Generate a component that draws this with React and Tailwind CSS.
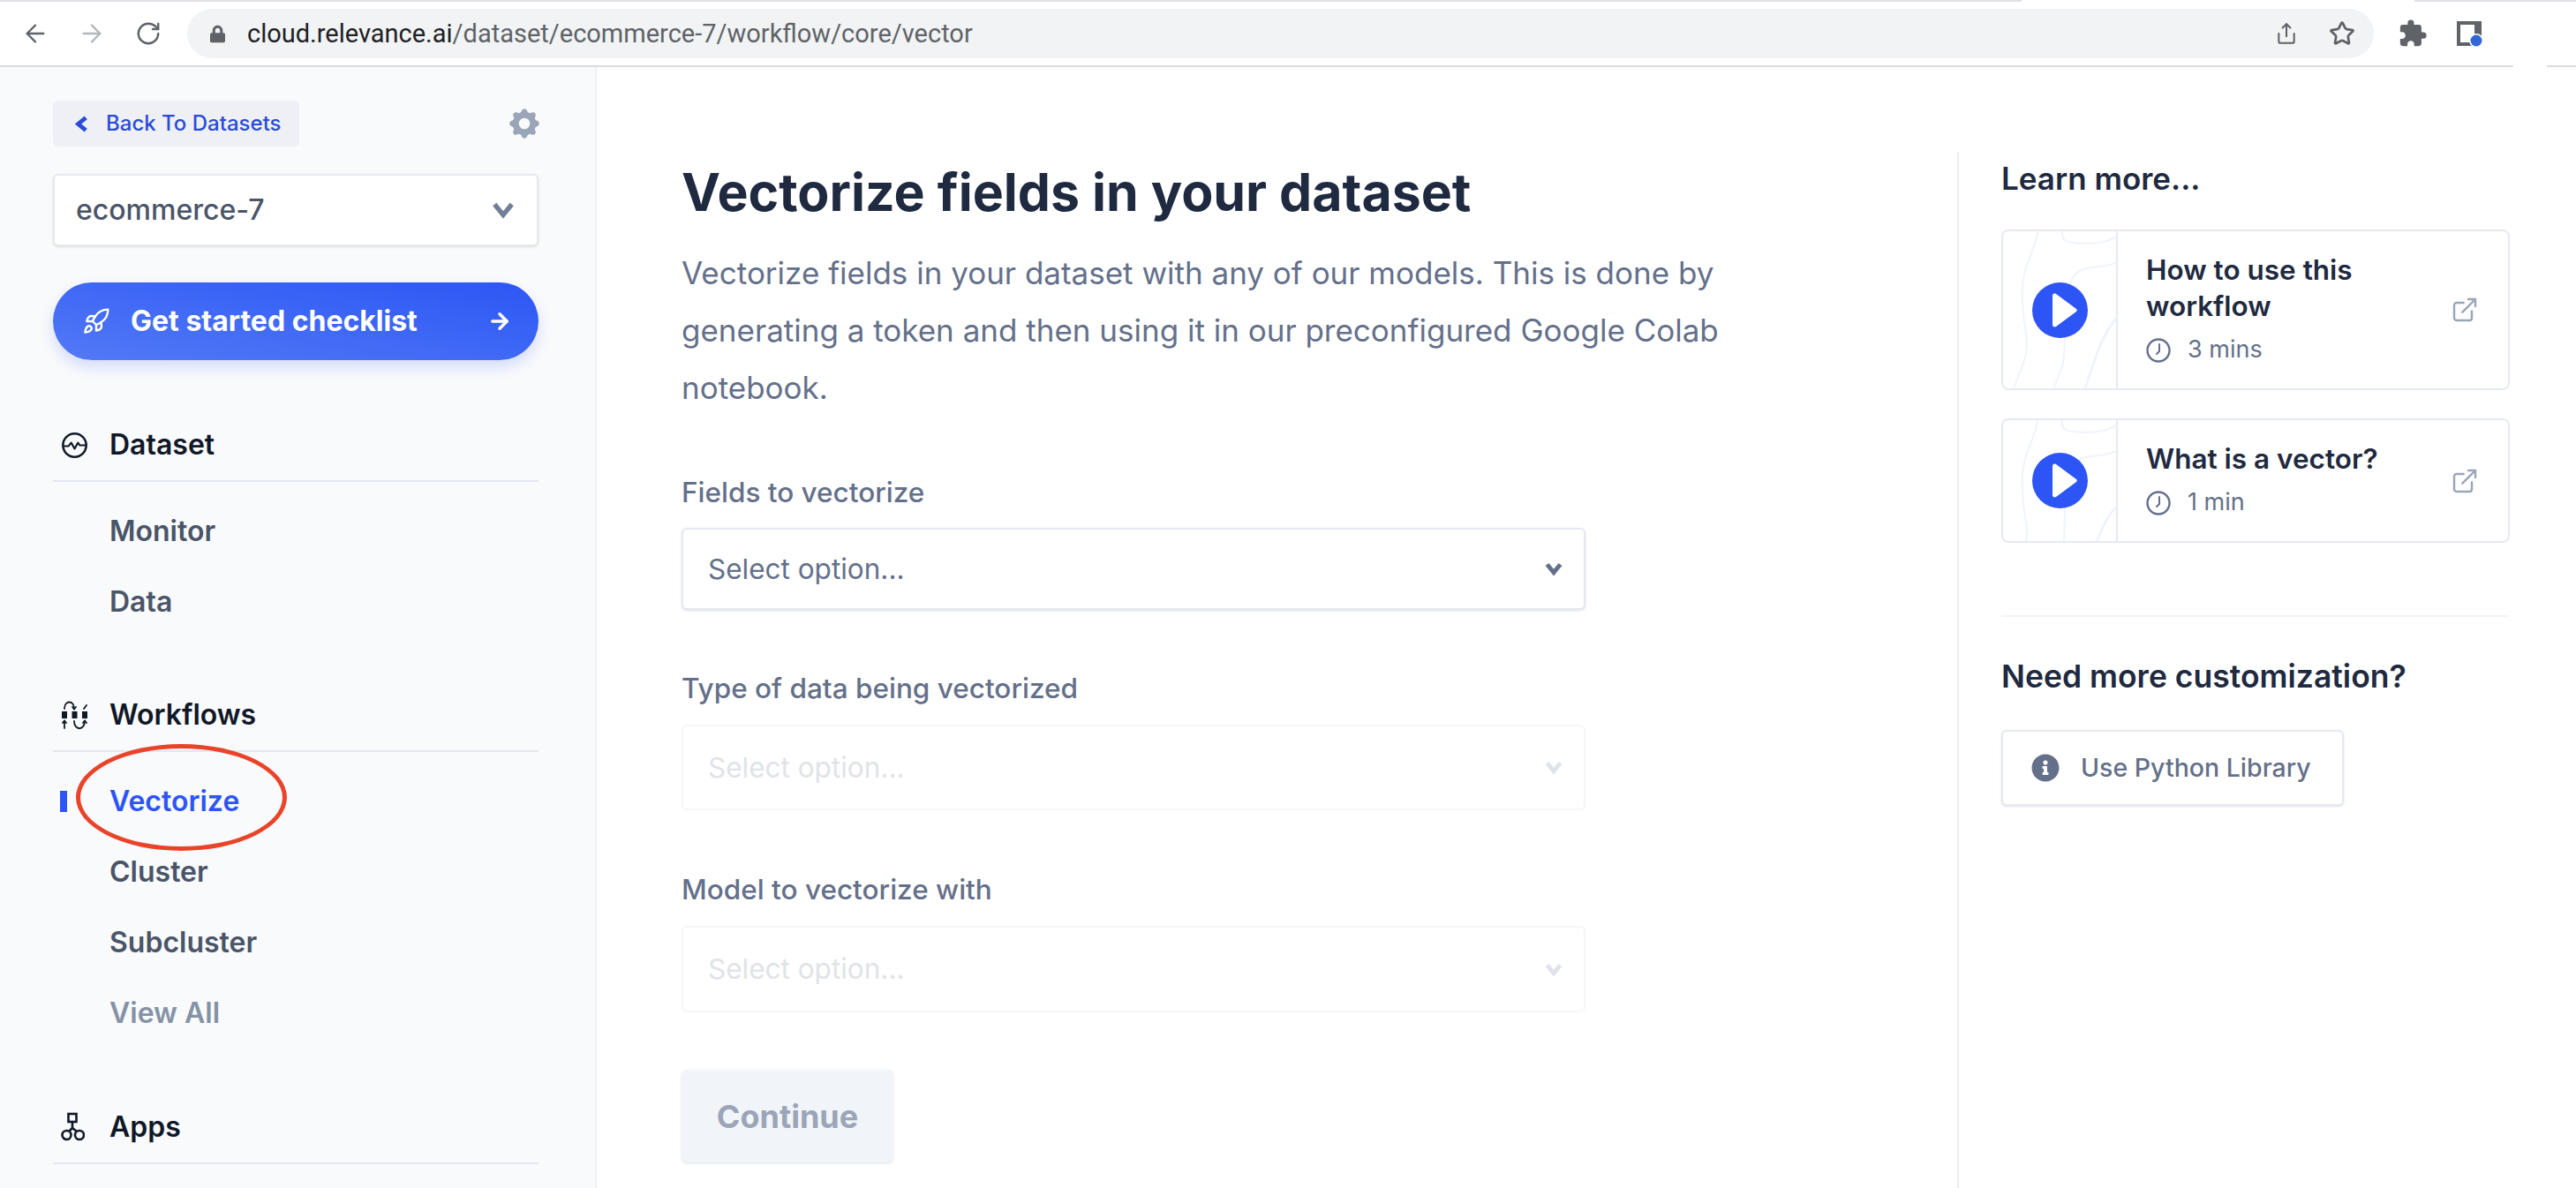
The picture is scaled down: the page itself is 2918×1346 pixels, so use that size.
import { ArrowLeft, ArrowRight, RotateCw, Share, Star, Rocket, ExternalLink } from "lucide-react";
import { FaInfoCircle, FaLock } from "react-icons/fa";
import { HiCog } from "react-icons/hi";
import { MdExtension } from "react-icons/md";

function BrowserBar() {
  return (
    <div className="h-[76px] bg-white flex flex-col font-['Roboto',sans-serif]">
      <div className="h-[2px] flex shrink-0">
        <div className="w-[2290px] bg-[#dee1e6]" />
        <div className="w-[445px]" />
        <div className="flex-1 bg-[#dee1e6]" />
      </div>
      <div className="flex-1 flex items-center">
        <ArrowLeft className="ml-[24px] w-[32px] h-[32px] text-[#5f6368]" strokeWidth={1.7} />
        <ArrowRight className="ml-[32px] w-[32px] h-[32px] text-[#b3b6ba]" strokeWidth={1.7} />
        <RotateCw className="ml-[33px] w-[30px] h-[30px] text-[#5f6368]" strokeWidth={1.9} />
        <div className="ml-[29px] w-[2477px] h-[56px] rounded-full bg-[#f1f3f4] flex items-center">
          <FaLock className="ml-[26px] w-[17px] h-[21px] text-[#5f6368]" />
          <div className="ml-[25px] text-[29px] leading-none text-[#5f6368]">
            <span className="text-[#202124]">cloud.relevance.ai</span>/dataset/ecommerce-7/workflow/core/vector
          </div>
          <Share className="ml-auto w-[26px] h-[30px] text-[#5f6368]" strokeWidth={1.9} />
          <Star className="ml-[35px] mr-[21px] w-[30px] h-[30px] text-[#5f6368]" strokeWidth={2.2} />
        </div>
        <MdExtension className="ml-[27px] w-[34px] h-[34px] text-[#5f6368]" />
        <svg className="ml-[32px] w-[32px] h-[32px]" viewBox="0 0 32 32">
          <path d="M1 2h28v28H1z M5 6v20h16V6z" fill="#5f6368" fillRule="evenodd" />
          <rect x="21" y="2" width="8" height="14" fill="#5f6368" />
          <circle cx="23" cy="24" r="8" fill="#fff" />
          <circle cx="23" cy="24" r="6.5" fill="#3367d6" />
        </svg>
      </div>
      <div className="h-[2px] flex shrink-0">
        <div className="w-[2847px] bg-[#dadce0]" />
        <div className="w-[38px]" />
        <div className="flex-1 bg-[#dadce0]" />
      </div>
    </div>
  );
}

function Chevron({ className, strokeWidth = 5 }) {
  return (
    <svg className={className} viewBox="0 0 24 20" fill="none" stroke="currentColor" strokeWidth={strokeWidth}>
      <path d="M3 4l9 11 9-11" />
    </svg>
  );
}

function DatasetIcon() {
  return (
    <svg className="w-[31px] h-[31px]" viewBox="0 0 32 32" fill="none" stroke="#111827" strokeWidth="2.6" strokeLinecap="round" strokeLinejoin="round">
      <circle cx="16" cy="16" r="13.6" />
      <path d="M3 17h6l3-4 4 7 4-7 2 3h7" strokeWidth="2.2" />
    </svg>
  );
}

function WorkflowIcon() {
  return (
    <svg className="w-[31px] h-[34px]" viewBox="0 0 31 34" fill="none" stroke="#111827" strokeWidth="1.8" strokeLinecap="round">
      <rect x="1" y="13" width="6" height="8" fill="#111827" stroke="none" />
      <rect x="12.5" y="13" width="6" height="8" fill="#111827" stroke="none" />
      <rect x="24" y="13" width="6" height="8" fill="#111827" stroke="none" />
      <path d="M4 10c0-10 11-10 11 0" />
      <path d="M13 8l2 2.5 2-2.5" />
      <path d="M4 24v8M2 26l2-2.5 2 2.5" />
      <path d="M15 24c0 11 12 11 12 0" />
      <path d="M25 26l2-2.5 2 2.5" />
      <path d="M26 10l3-4" />
    </svg>
  );
}

function AppsIcon() {
  return (
    <svg className="w-[27px] h-[34px]" viewBox="0 0 27 34" fill="none" stroke="#111827" strokeWidth="2.6">
      <rect x="8.5" y="2" width="9" height="9" />
      <circle cx="6.5" cy="26" r="5" />
      <circle cx="21" cy="26" r="5" />
      <path d="M13 11v8M13 18l-4 4M13 18l5 4" />
    </svg>
  );
}

function SectionHead({ icon, label, className }) {
  return (
    <div className={className}>
      <div className="h-[60px] flex items-center mb-[10px] text-[32px] font-semibold text-[#111827]">
        <div className="w-[64px] pl-[9px] flex items-center">{icon}</div>
        {label}
      </div>
      <div className="h-[2px] bg-[#e2e8f0]" />
    </div>
  );
}

function NavItem({ label, active, muted }) {
  let color = "text-[#4a5568]";
  if (active) color = "text-[#2d55f5]";
  if (muted) color = "text-[#8592a6]";
  return (
    <div className={"h-[80px] flex items-center text-[32px] font-semibold " + color}>
      <div className="w-[64px] pl-[8px]">
        {active && <div className="w-[8px] h-[24px] bg-[#2d55f5]" />}
      </div>
      {label}
    </div>
  );
}

function Sidebar() {
  return (
    <div className="relative w-[676px] shrink-0 bg-[#f9fafc] border-r-2 border-[#edf0f5] pl-[60px] pr-[64px] pt-[38px]">
      <div className="flex items-center justify-between">
        <div className="w-[279px] h-[52px] rounded-[6px] bg-[#eef0f6] flex items-center text-[#2a4bd7] text-[24px] font-medium">
          <Chevron className="ml-[23px] w-[19px] h-[19px] rotate-90" strokeWidth={6} />
          <span className="ml-[18px]">Back To Datasets</span>
        </div>
        <HiCog className="w-[42px] h-[42px] mr-[-5px] text-[#9aa5b8]" />
      </div>
      <div className="mt-[31px] h-[82px] bg-white border-2 border-[#e6e9f2] rounded-[6px] flex items-center justify-between pl-[24px] pr-[25px] shadow-sm">
        <span className="text-[32px] font-medium text-[#4a5568]">ecommerce-7</span>
        <Chevron className="w-[26px] h-[22px] text-[#718096]" />
      </div>
      <div className="mt-[41px] h-[88px] rounded-full bg-gradient-to-tr from-[#5279f6] to-[#2d55f5] flex items-center text-white shadow-[0_8px_16px_rgba(45,85,245,0.18)]">
        <Rocket className="ml-[33px] w-[32px] h-[32px]" strokeWidth={1.8} />
        <span className="ml-[23px] text-[32px] font-bold">Get started checklist</span>
        <ArrowRight className="ml-auto mr-[30px] w-[28px] h-[28px]" strokeWidth={3} />
      </div>
      <SectionHead className="mt-[66px]" icon={<DatasetIcon />} label="Dataset" />
      <div className="mt-[16px]">
        <NavItem label="Monitor" />
        <NavItem label="Data" />
      </div>
      <SectionHead className="mt-[58px]" icon={<WorkflowIcon />} label="Workflows" />
      <div className="mt-[16px]">
        <NavItem label="Vectorize" active />
        <NavItem label="Cluster" />
        <NavItem label="Subcluster" />
        <NavItem label="View All" muted />
      </div>
      <SectionHead className="mt-[59px]" icon={<AppsIcon />} label="Apps" />
      {/* red annotation circled on top of the screenshot */}
      <div className="absolute left-[86px] top-[767px] w-[239px] h-[121px] rounded-[50%] border-[5px] border-[#e9442a]" />
    </div>
  );
}

function SelectBox({ disabled, height }) {
  const box = disabled
    ? "border-[#f5f6f8] text-[#e0e3e8]"
    : "border-[#e4e8f2] text-[#64708a] shadow-sm";
  return (
    <div className={"bg-white border-2 rounded-[6px] flex items-center justify-between pl-[28px] pr-[24px] " + height + " " + box}>
      <span className="text-[31.5px]">Select option...</span>
      <Chevron className="w-[20px] h-[17px]" strokeWidth={6} />
    </div>
  );
}

function Label({ text, className }) {
  return <div className={"h-[40px] flex items-center text-[31.5px] font-medium text-[#64708a] " + className}>{text}</div>;
}

function MainForm() {
  return (
    <div className="w-[1541px] shrink-0 pl-[96px]">
      <h1 className="mt-[106px] h-[72px] leading-[72px] text-[59px] font-bold text-[#1f2a40]">Vectorize fields in your dataset</h1>
      <p className="mt-[23px] text-[35px] leading-[65px] text-[#64708a]">
        Vectorize fields in your dataset with any of our models. This is done by<br />
        generating a token and then using it in our preconfigured Google Colab<br />
        notebook.
      </p>
      <div className="w-[1024px]">
        <Label className="mt-[66px]" text="Fields to vectorize" />
        <div className="mt-[20px]"><SelectBox height="h-[93px]" /></div>
        <Label className="mt-[69px]" text="Type of data being vectorized" />
        <div className="mt-[21px]"><SelectBox disabled height="h-[97px]" /></div>
        <Label className="mt-[70px]" text="Model to vectorize with" />
        <div className="mt-[21px]"><SelectBox disabled height="h-[98px]" /></div>
      </div>
      <div className="mt-[65px] w-[240px] h-[105px] rounded-[6px] bg-[#f1f4f9] flex items-center justify-center text-[36px] font-bold text-[#9aa5b8] shadow-sm">
        Continue
      </div>
    </div>
  );
}

function ClockIcon() {
  return (
    <svg className="w-[28px] h-[28px]" viewBox="0 0 28 28" fill="none" stroke="#64708a" strokeWidth="2.4" strokeLinecap="round">
      <circle cx="14" cy="14" r="12.5" />
      <path d="M15 7v8l-3 3" strokeWidth="2" />
    </svg>
  );
}

function VideoCard({ title, time, height }) {
  return (
    <div className={"flex border-2 border-[#e6e9f4] rounded-[8px] overflow-hidden bg-white " + height}>
      <div className="relative w-[130px] shrink-0 border-r-2 border-[#e6e9f4] flex items-center justify-center">
        <svg className="absolute inset-0 w-full h-full" viewBox="0 0 130 180" preserveAspectRatio="xMinYMin slice" fill="none" stroke="#eff3fc" strokeWidth="2">
          <path d="M40 0c-6 30-18 40-18 70 0 50 12 50 0 85l-10 25" />
          <path d="M68 0c-2 12 6 14 28 14 16 0 24-2 34-8" />
          <path d="M130 36c-20 8-38 2-48 14-18 22-6 90-16 110l-8 20" />
          <path d="M130 100c-16 16-26 50-36 80" strokeWidth="3" />
        </svg>
        <svg className="relative w-[63px] h-[63px]" viewBox="0 0 63 63">
          <circle cx="31.5" cy="31.5" r="31.5" fill="#2d55f5" />
          <path d="M23 15c0-2 2-3 4-2l23 17c1 1 1 2 0 3L27 50c-2 1-4 0-4-2z" fill="#fff" />
        </svg>
      </div>
      <div className="flex-1 pl-[32px] flex flex-col justify-center">
        <div className="text-[31.5px] leading-[41px] font-semibold text-[#1f2a40] w-[290px]">{title}</div>
        <div className="mt-[9px] flex items-center text-[27px] text-[#64708a]">
          <ClockIcon />
          <span className="ml-[19px]">{time}</span>
        </div>
      </div>
      <div className="flex items-center pr-[33px]">
        <ExternalLink className="w-[32px] h-[32px] text-[#9aa5b8]" strokeWidth={1.8} />
      </div>
    </div>
  );
}

function RightPanel() {
  return (
    <div className="flex-1 mt-[96px] border-l-2 border-[#e8ecf3] pl-[48px] pr-[75px]">
      <div className="h-[60px] flex items-center text-[35px] font-semibold text-[#1f2a40]">Learn more...</div>
      <div className="mt-[28px]"><VideoCard title="How to use this workflow" time="3 mins" height="h-[182px]" /></div>
      <div className="mt-[32px]"><VideoCard title="What is a vector?" time="1 min" height="h-[141px]" /></div>
      <div className="mt-[82px] h-[2px] bg-[#f1f5f9]" />
      <div className="mt-[38px] h-[60px] flex items-center text-[35.5px] font-semibold text-[#1f2a40]">Need more customization?</div>
      <div className="mt-[30px] w-[388px] h-[86px] bg-white border-2 border-[#e6e9f4] rounded-[6px] flex items-center shadow-sm text-[#64708a]">
        <FaInfoCircle className="ml-[32px] w-[32px] h-[32px]" />
        <span className="ml-[24px] text-[28.5px] font-medium">Use Python Library</span>
      </div>
    </div>
  );
}

export default function App() {
  return (
    <div className="h-[1346px] overflow-hidden bg-white flex flex-col font-['Inter',sans-serif]">
      <BrowserBar />
      <div className="flex-1 flex min-h-0">
        <Sidebar />
        <MainForm />
        <RightPanel />
      </div>
    </div>
  );
}
